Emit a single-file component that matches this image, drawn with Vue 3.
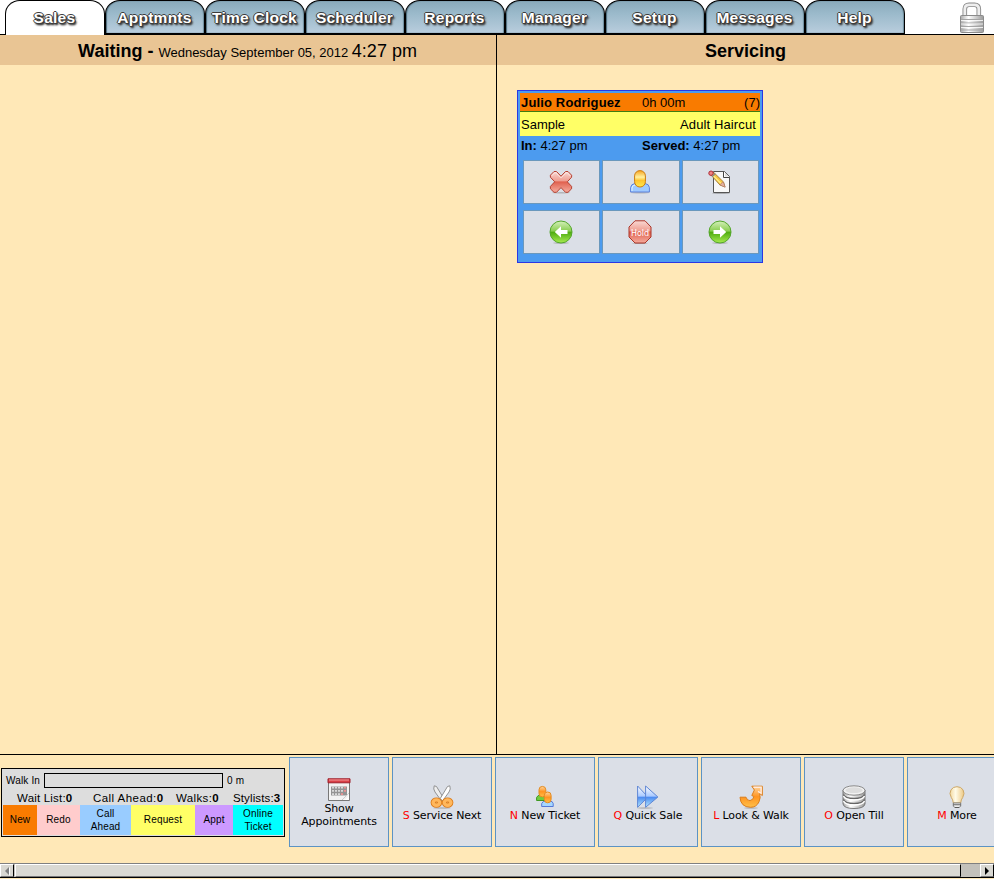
<script setup>
const tabs = ['Sales', 'Apptmnts', 'Time Clock', 'Scheduler', 'Reports', 'Manager', 'Setup', 'Messages', 'Help']
const actions = [
  { icon: 'calendar', key: '', label: 'Show Appointments' },
  { icon: 'scissors', key: 'S', label: 'Service Next' },
  { icon: 'people', key: 'N', label: 'New Ticket' },
  { icon: 'forward', key: 'Q', label: 'Quick Sale' },
  { icon: 'turn', key: 'L', label: 'Look & Walk' },
  { icon: 'till', key: 'O', label: 'Open Till' },
  { icon: 'bulb', key: 'M', label: 'More' },
]
const cardIcons = ['cancel', 'person', 'edit', 'back', 'hold', 'next']
</script>

<template>
  <div class="screen">
    <svg class="defs" width="0" height="0">
      <defs>
        <linearGradient id="gRed" x2="0" y2="1"><stop offset="0" stop-color="#f9d8d3" /><stop offset=".45" stop-color="#ef9d90" /><stop offset=".5" stop-color="#e0604e" /><stop offset="1" stop-color="#f5ad9f" /></linearGradient>
        <linearGradient id="gGreen" x2="0" y2="1"><stop offset="0" stop-color="#d5f0bb" /><stop offset=".45" stop-color="#8bce52" /><stop offset=".52" stop-color="#51ad12" /><stop offset="1" stop-color="#a8ec50" /></linearGradient>
        <linearGradient id="gOrange" x2="0" y2="1"><stop offset="0" stop-color="#f8a51c" /><stop offset=".4" stop-color="#fff0a0" /><stop offset=".6" stop-color="#ffc52e" /><stop offset="1" stop-color="#ffe94e" /></linearGradient>
        <linearGradient id="gAmber" x2="0" y2="1"><stop offset="0" stop-color="#ffd6a0" /><stop offset=".5" stop-color="#ff9420" /><stop offset="1" stop-color="#ffc04a" /></linearGradient>
        <linearGradient id="gBlue" x2="0" y2="1"><stop offset="0" stop-color="#ffffff" /><stop offset=".48" stop-color="#a9c9ff" /><stop offset=".52" stop-color="#4b8af0" /><stop offset="1" stop-color="#b5eaff" /></linearGradient>
        <linearGradient id="gMetal"><stop offset="0" stop-color="#a8a8a8" /><stop offset=".35" stop-color="#ffffff" /><stop offset="1" stop-color="#9a9a9a" /></linearGradient>
        <linearGradient id="gBulb"><stop offset="0" stop-color="#f3d9a0" /><stop offset=".4" stop-color="#fffbe8" /><stop offset="1" stop-color="#ecc883" /></linearGradient>
      </defs>
      <symbol id="cancel" viewBox="0 0 24 24">
        <ellipse cx="12" cy="22.8" rx="9" ry=".8" fill="#999" opacity=".6" />
        <path d="M5 1.5H7.5L12 6.2 16.5 1.5H19L22.6 5.2V7.2L18.3 11.8 22.6 16.4V18.8L19 22.3H16.5L12 17.6 7.5 22.3H5L1.4 18.8V16.4L5.7 11.8 1.4 7.2V5.2Z" fill="url(#gRed)" stroke="#b53f30" />
        <path d="M2.7 5.9 5.6 2.8H7L12 7.9 17 2.8H18.4L21.3 5.9" fill="none" stroke="#fff" opacity=".55" />
      </symbol>
      <symbol id="person" viewBox="0 0 24 24">
        <ellipse cx="12" cy="22.8" rx="10" ry=".8" fill="#999" opacity=".6" />
        <path d="M2.6 22 2.6 17.5 Q3 14 7 13.5 L17 13.5 Q21 14 21.4 17.5 L21.4 22Z" fill="#9fcaff" stroke="#5c82dc" />
        <path d="M4 21v-3q0-2.5 3-3" fill="none" stroke="#e2f4ff" />
        <rect x="6.6" y=".6" width="10.8" height="16.4" rx="5.3" fill="url(#gOrange)" stroke="#cb7b0d" />
      </symbol>
      <symbol id="edit" viewBox="0 0 24 24">
        <ellipse cx="13" cy="23.2" rx="9" ry=".7" fill="#777" opacity=".5" />
        <path d="M5.5 1.5h11l5 5v16h-16z" fill="#f8f8f8" stroke="#555" />
        <path d="M15.5 1.5v6h6" fill="#fff" stroke="#444" />
        <path d="M17 2.5 20.8 6.6H17z" fill="#ddd" />
        <path d="M3 5 5.8 2.5 15.5 12 17 17 12 15Z" fill="#f7c643" stroke="#a07832" stroke-width=".9" />
        <path d="M11.8 14.8 15.2 11.8 17.2 17.2Z" fill="#e5b1a0" stroke="#a66b5c" stroke-width=".5" />
        <path d="M5.5 6 12.8 13.2" stroke="#fff08a" stroke-width="1.2" />
        <circle cx="3" cy="3.2" r="2.2" fill="#ef8686" stroke="#ae2934" />
        <path d="M4.2 6.4 7.2 3.6" stroke="#888" stroke-width="1.4" />
      </symbol>
      <symbol id="back" viewBox="0 0 24 24">
        <ellipse cx="12" cy="23" rx="8" ry=".8" fill="#888" opacity=".6" />
        <circle cx="12" cy="12" r="11" fill="url(#gGreen)" stroke="#54a72d" />
        <path d="M12 6.2v3.9h6.5v3.8H12v3.9L5.8 12z" fill="#fff" />
      </symbol>
      <symbol id="next" viewBox="0 0 24 24">
        <ellipse cx="12" cy="23" rx="8" ry=".8" fill="#888" opacity=".6" />
        <circle cx="12" cy="12" r="11" fill="url(#gGreen)" stroke="#54a72d" />
        <path d="M12 6.2v3.9H5.5v3.8H12v3.9l6.2-5.8z" fill="#fff" />
      </symbol>
      <symbol id="hold" viewBox="0 0 24 24">
        <ellipse cx="12" cy="23.3" rx="8" ry=".6" fill="#888" opacity=".6" />
        <path d="M7 .8h10L23 7v10l-6 6H7l-6-6V7z" fill="url(#gRed)" stroke="#ab3528" />
      </symbol>
      <symbol id="calendar" viewBox="0 0 24 24">
        <path d="M1.5 2.5h21v20h-21z" fill="#f3f3f3" stroke="#777" />
        <path d="M1 .8h22v4H1z" fill="#d93f46" stroke="#9e1f2b" />
        <path d="M2 2h20" stroke="#f39a9a" />
        <path d="M4 8.5h16v9H4z" fill="#949494" />
        <path d="M5 9.7h2m1 0h2m1 0h2m1 0h2M5 12.9h2m1 0h2m1 0h2m1 0h2M5 16.1h2m1 0h2m1 0h2" stroke="#d9d9d9" stroke-width="1.8" />
        <path d="M17 9.7h2M17 12.9h2M14 16.1h2" stroke="#ed9292" stroke-width="1.8" />
        <path d="M16 22q5-1 6-6v6z" fill="#fff" /><path d="M15 22 22 15" stroke="#ccc" />
      </symbol>
      <symbol id="scissors" viewBox="0 0 24 24">
        <ellipse cx="12" cy="23" rx="9" ry=".8" fill="#888" opacity=".5" />
        <path d="M4.2.8Q2.9 4 5 7l6.5 9 2.2-2.6L6.5 1.5Z" fill="#eee" stroke="#888" stroke-width=".9" />
        <path d="M19.8.8Q21.1 4 19 7l-6.5 9-2.2-2.6 7.2-11.9Z" fill="#fff" stroke="#888" stroke-width=".9" />
        <g fill="none"><g stroke="#dc7915" stroke-width="5"><ellipse cx="6.4" cy="17.6" rx="3.3" ry="2.7" /><ellipse cx="17.6" cy="17.6" rx="3.3" ry="2.7" /></g><g stroke="#ffb75c" stroke-width="3.4"><ellipse cx="6.4" cy="17.6" rx="3.3" ry="2.7" /><ellipse cx="17.6" cy="17.6" rx="3.3" ry="2.7" /></g></g>
      </symbol>
      <symbol id="people" viewBox="0 0 24 24">
        <path d="M3.6 15.5v-3q1-2.5 4-2.5h6v5.5z" fill="#70cc3e" stroke="#3e9821" />
        <rect x="6" y="1.4" width="6.8" height="10.5" rx="3.4" fill="url(#gAmber)" stroke="#e38b21" />
        <path d="M8.7 21.5v-3q1-2.5 4-2.5h4q3 0 3.5 2.5v3z" fill="#a6d7ff" stroke="#5579d7" />
        <rect x="11.3" y="7" width="6.8" height="10.8" rx="3.4" fill="url(#gAmber)" stroke="#e38b21" />
      </symbol>
      <symbol id="forward" viewBox="0 0 24 24">
        <ellipse cx="9" cy="23" rx="8" ry=".8" fill="#888" opacity=".5" />
        <path d="M1.6 1 12 12 1.6 22.3Z" fill="url(#gBlue)" stroke="#5e86d4" /><path d="M9.6 1 21.9 12 9.6 22.3Z" fill="url(#gBlue)" stroke="#5e86d4" />
      </symbol>
      <symbol id="turn" viewBox="0 0 24 24">
        <ellipse cx="12" cy="23" rx="7" ry=".8" fill="#888" opacity=".5" />
        <path d="M12.8 1.2H23.3V10.5L20.6 8.5Q22 12.5 20 16.8 17.5 22.3 11.5 22.3 1.5 22 1 12.2H7Q8 15.8 11 15.6 14.8 14.6 14.8 11.5L12.8 10.5 15.4 5Z" fill="url(#gAmber)" stroke="#db7d1b" />
        <path d="M14.5 2.3H22.1V8.3L19 6.4" fill="none" stroke="#ffebdf" stroke-width="1.4" />
      </symbol>
      <symbol id="till" viewBox="0 0 24 24">
        <path d="M1 5v14Q2 23.5 12 23.5T23 19V5" fill="url(#gMetal)" stroke="#777" />
        <path d="M1.5 9.5Q3 13.5 12 13.5t10.5-4M1.5 14.5Q3 18.5 12 18.5t10.5-4" fill="none" stroke="#666" stroke-width="1.3" />
        <path d="M1.5 11Q3 15 12 15T22.5 11M1.5 16Q3 20 12 20T22.5 16" fill="none" stroke="#fff" stroke-width="1.4" />
        <ellipse cx="12" cy="5.5" rx="11" ry="4.7" fill="#f2f2f2" stroke="#888" />
        <ellipse cx="12" cy="5.2" rx="8.7" ry="2.9" fill="#ddd" />
      </symbol>
      <symbol id="bulb" viewBox="0 0 24 24">
        <path d="M8.3 18Q8 14.5 6.3 12.5 3.8 8.5 6 4.8 8 1.7 12 1.7t6 3.1q2.2 3.7-.3 7.7Q16 14.5 15.7 18Z" fill="url(#gBulb)" stroke="#cda868" />
        <path d="M8.3 18h7.4v3.2L14 22.5h-4l-1.7-1.3z" fill="#fff" stroke="#777" /><path d="M8.5 19.8h7M10 22.4h4" stroke="#555" />
      </symbol>
      <symbol id="lock" viewBox="0 0 26 32">
        <path d="M5.8 14V7Q5.8 2.8 10 2.8h5.5Q19.8 2.8 19.8 7v7" fill="none" stroke="#888" stroke-width="4.6" />
        <path d="M5.8 14V7Q5.8 2.8 10 2.8h5.5Q19.8 2.8 19.8 7v7" fill="none" stroke="#eee" stroke-width="2.8" />
        <rect x="1.5" y="13.5" width="23" height="17" rx="1" fill="url(#gMetal)" stroke="#8b8b8b" />
        <path d="M2 17.5h22M2 21h22M2 24.5h22M2 28h22" stroke="#a5a5a5" /><path d="M2 18.5h22M2 22h22M2 25.5h22" stroke="#fff" opacity=".8" />
      </symbol>
    </svg>

    <nav class="tabs">
      <a v-for="(tab, i) in tabs" :key="tab" class="tab" :class="{ active: i === 0 }"><span>{{ tab }}</span></a>
      <svg class="lock"><use href="#lock" /></svg>
    </nav>

    <main class="columns">
      <section class="pane waiting">
        <h2><b>Waiting - </b><small>Wednesday September 05, 2012 </small><span>4:27 pm</span></h2>
      </section>
      <section class="pane">
        <h2><b>Servicing</b></h2>
        <article class="card">
          <div class="line client"><b>Julio Rodriguez</b><span>0h 00m</span><span>(7)</span></div>
          <div class="line service"><span>Sample</span><span class="wide">Adult Haircut</span></div>
          <div class="line times"><span><b>In:</b> 4:27 pm</span><span><b>Served:</b> 4:27 pm</span></div>
          <div class="grid">
            <button v-for="icon in cardIcons" :key="icon">
              <svg class="icon" viewBox="0 0 24 24">
                <use :href="'#' + icon" />
                <text v-if="icon === 'hold'" class="hold-text" x="3" y="15.5" textLength="18">Hold</text>
              </svg>
            </button>
          </div>
        </article>
      </section>
    </main>

    <footer class="footer">
      <div class="legend">
        <div class="walk"><span>Walk In</span><i></i><span>0 m</span></div>
        <div class="counts">
          <span>Wait List:<b>0</b></span><span>Call Ahead:<b>0</b></span><span>Walks:<b>0</b></span><span>Stylists:<b>3</b></span>
        </div>
        <div class="types">
          <span class="new">New</span><span class="redo">Redo</span><span class="call">Call<br>Ahead</span><span class="request">Request</span><span class="appt">Appt</span><span class="online">Online<br>Ticket</span>
        </div>
      </div>
      <button v-for="a in actions" :key="a.label" class="action">
        <svg class="icon"><use :href="'#' + a.icon" /></svg>
        <span><em v-if="a.key">{{ a.key }}&nbsp;</em>{{ a.label }}</span>
      </button>
    </footer>

    <div class="scroll">
      <span class="arrow"><svg viewBox="0 0 12 12"><path d="M8 2v8L4 6z" fill="#808080" /><path d="M8.5 2.5v8" stroke="#fff" /></svg></span>
      <span class="thumb"></span><span class="track"></span>
      <span class="arrow"><svg viewBox="0 0 12 12"><path d="M4 2v8l4-4z" fill="#000" /></svg></span>
    </div>
  </div>
</template>

<style>
body { overflow: hidden; }
</style>

<style scoped>
* { box-sizing: border-box; }
.screen { width: 994px; height: 879px; overflow: hidden; display: flex; flex-direction: column; background: #ffe8b7; color: #000; font-family: "Liberation Sans", Arial, sans-serif; }
.defs { position: absolute; }
button { font: inherit; color: inherit; padding: 0; margin: 0; border-radius: 0; background: #dbdfe7; }
.icon { width: 24px; height: 24px; display: block; flex: none; }
.hold-text { font: 8px "DejaVu Sans", sans-serif; fill: #fff; }
.tabs { display: flex; height: 35px; flex: none; padding-left: 5px; background: linear-gradient(#000, #000) 0 34px / 100% 1px no-repeat #fff; }
.tab { width: 100px; height: 34px; border: 1px solid #000; border-radius: 15px 15px 0 0 / 14px 14px 0 0; background: linear-gradient(#89aabb, #9bbacb 40%, #b9cddd); display: flex; justify-content: center; align-items: flex-start; font-size: 15.5px; letter-spacing: .25px; font-weight: bold; color: #fff; line-height: 18px; box-shadow: inset 1px 0 1px #4d6b7b, inset -1px 0 1px #6d8b9b; }
.tab span { padding: 8px 1px 0 0; white-space: nowrap; text-shadow: 1px 0 #3c3c3c, -1px 0 #3c3c3c, 0 1px #3c3c3c, 0 -1px #3c3c3c, 1px 1px #3c3c3c, 1px 2px 2px #333, 2px 2px 2px #555; }
.tab.active { height: 35px; background: #fff; border-bottom: 0; box-shadow: none; }
.lock { width: 26px; height: 32px; margin: 2px 9px 0 auto; }
.columns { display: grid; grid-template-columns: 497px 497px; height: 720px; flex: none; border-bottom: 1px solid #000; }
.pane.waiting { border-right: 1px solid #000; }
.pane h2 { margin: 0; height: 30px; line-height: 32px; background: #e9c594; text-align: center; font-size: 18px; font-weight: normal; white-space: nowrap; }
.pane.waiting h2 { padding-right: 1px; }
.pane h2 small { font-size: 13px; }
.card { width: 246px; height: 173px; margin: 25px 0 0 20px; border: 1px solid #2a36e4; padding: 2px; background: #4c9bef; font-size: 13px; }
.line { display: grid; grid-template-columns: 121px 1fr auto; padding: 0 1px; white-space: nowrap; }
.client { height: 19px; line-height: 19px; background: #f97b00; border-bottom: 1px solid #3f7d12; padding-right: 0; }
.client b { letter-spacing: .15px; }
.service { height: 24px; line-height: 25px; background: #ffff66; display: flex; justify-content: space-between; padding-right: 4px; }
.wide { letter-spacing: .12px; }
.times { height: 24px; line-height: 20px; }
.grid { display: grid; grid-template-columns: 77px 78px 77px; grid-template-rows: 44px 44px; gap: 6px 2px; padding-left: 3px; }
.grid button { border: 1px solid #6a98bd; padding: 0 2px 1px 0; display: flex; justify-content: center; align-items: center; }
.footer { display: flex; height: 108px; flex: none; padding: 2px 0 0 1px; gap: 3px; overflow: hidden; }
.legend { width: 284px; height: 69px; flex: none; margin: 11px 1px 0 0; border: 1px solid #000; padding: 4px 1px 1px; background: #ddd; font-size: 10px; letter-spacing: .15px; display: flex; flex-direction: column; }
.walk { display: flex; align-items: center; height: 15px; padding-left: 3px; white-space: nowrap; }
.walk span:first-child { width: 38px; }
.walk i { width: 179px; height: 15px; border: 1px solid #000; margin-right: 4px; }
.counts { height: 17px; line-height: 20px; display: flex; padding-left: 14px; font-size: 11.5px; letter-spacing: .2px; white-space: nowrap; }
.counts span:nth-child(1) { width: 76px; }
.counts span:nth-child(2) { width: 83px; letter-spacing: .45px; }
.counts span:nth-child(3) { width: 57px; letter-spacing: .35px; }
.counts span:nth-child(4) { letter-spacing: .12px; }
.types { display: grid; grid-template-columns: 34px 43px 51px 64px 38px 50px; height: 30px; line-height: 13px; text-align: center; }
.types span { display: flex; align-items: center; justify-content: center; padding-bottom: 1px; }
.new { background: #f97b00; } .redo { background: #ffcccc; } .call { background: #99ccff; } .request { background: #ffff66; } .appt { background: #cc99ff; } .online { background: #00ffff; }
.action { width: 100px; height: 90px; flex: none; border: 1px solid #5c93c4; padding-top: 2px; display: flex; flex-direction: column; align-items: center; justify-content: center; font: 11px/13px "DejaVu Sans", sans-serif; letter-spacing: -.12px; }
.action em { color: #f00; font-style: normal; }
.scroll { display: flex; height: 15px; flex: none; background: #c3c1bb; border-top: 1px solid #808080; border-bottom: 1px solid #000; }
.arrow { width: 14px; background: #d9d8d2; border: 1px solid #fff; border-right-color: #000; border-bottom-color: #777; flex: none; }
.arrow svg { width: 12px; height: 12px; display: block; }
.thumb { width: 946px; margin-left: 1px; background: #dad9d3; border: 1px solid #fff; border-right-color: #000; border-bottom-color: #777; }
.track { flex: 1; }
</style>
